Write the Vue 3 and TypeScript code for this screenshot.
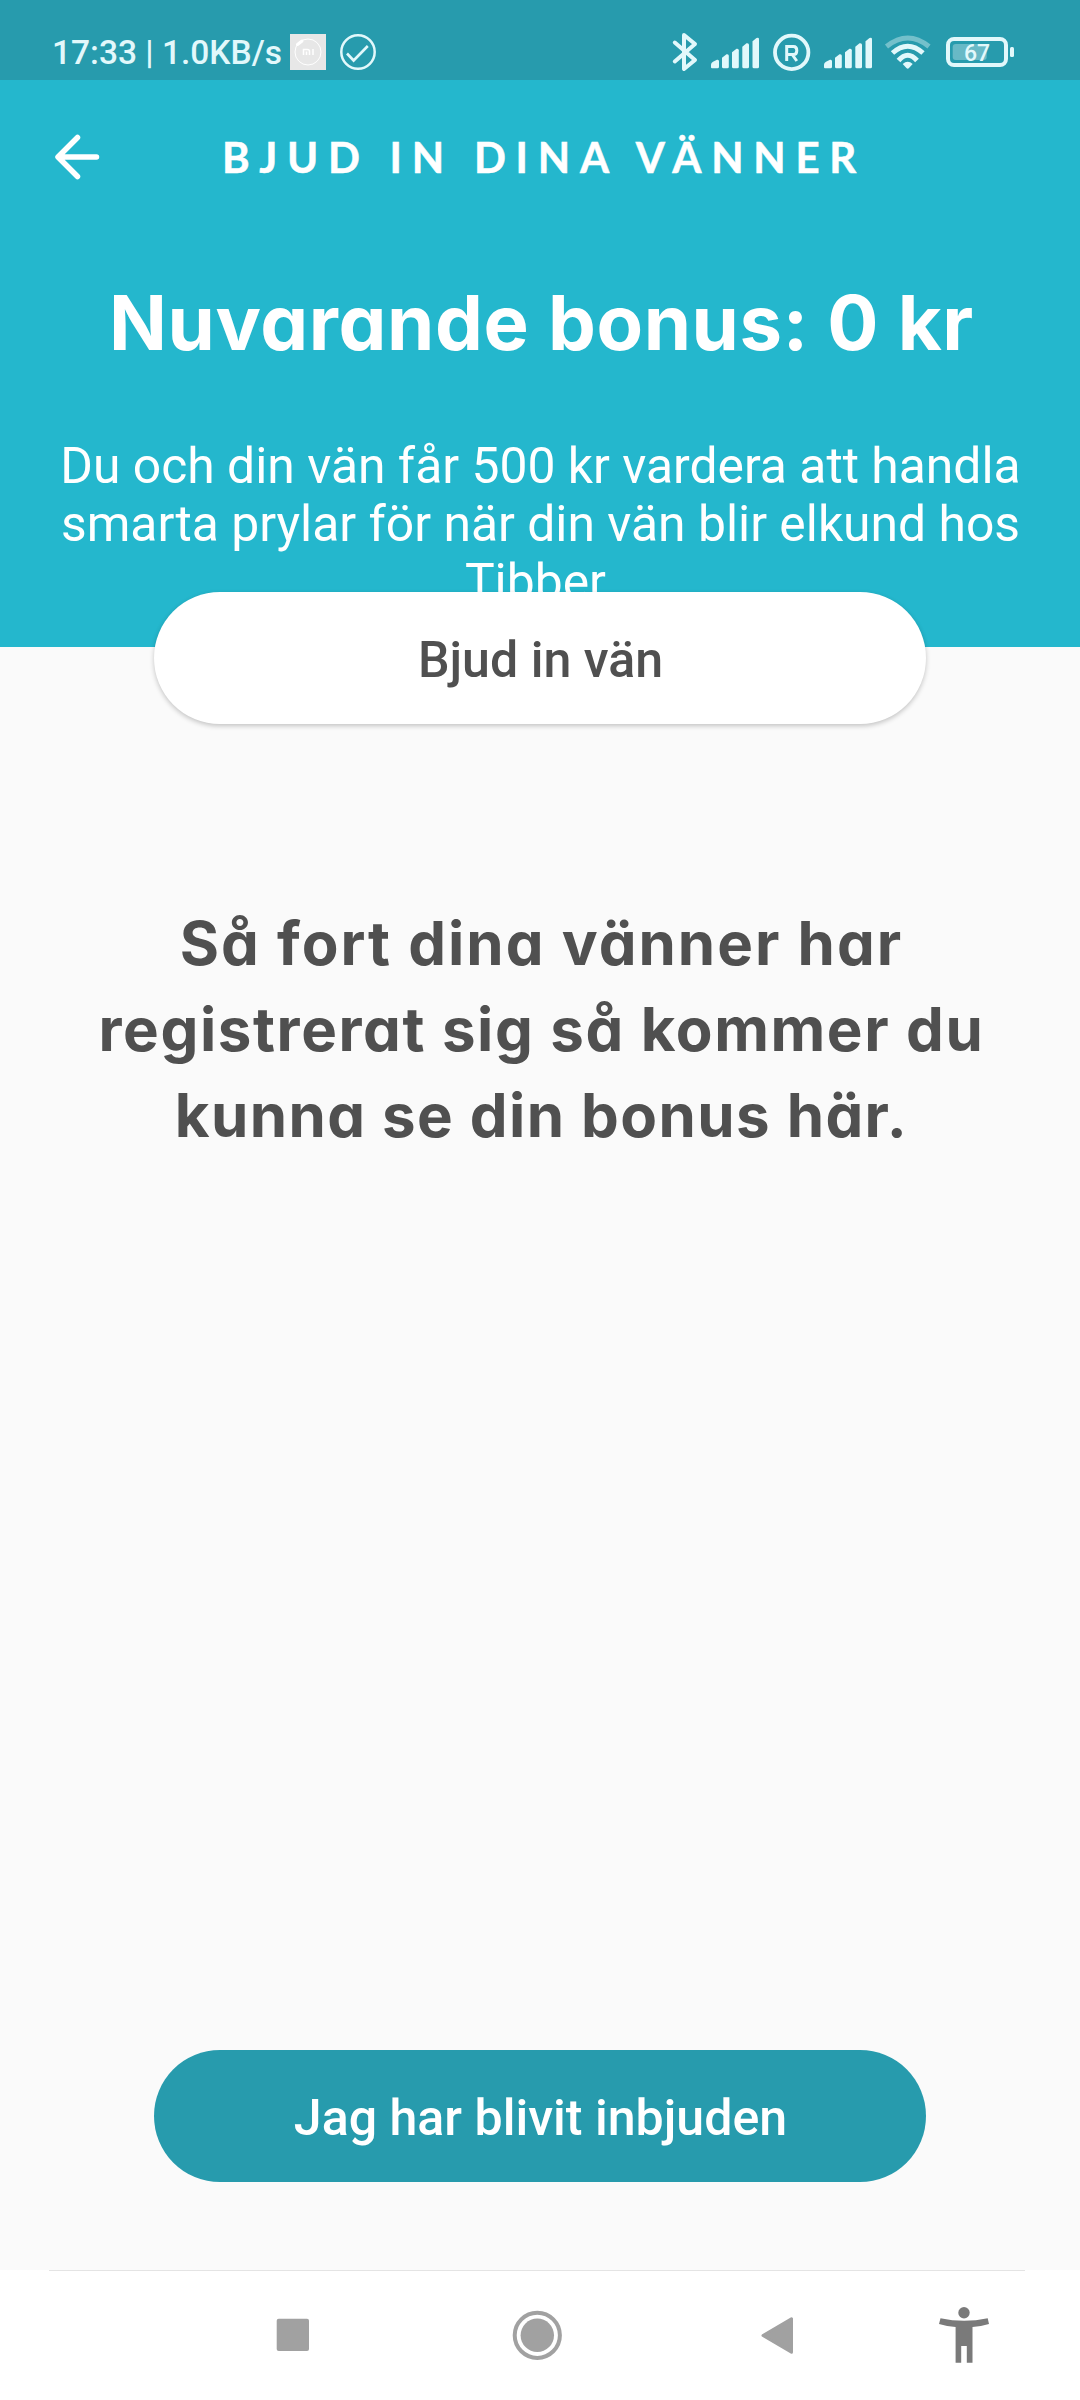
<script setup lang="ts">
interface Line {
  text: string
  spacing: number
}

const messageLines: Line[] = [
  { text: 'Så fort dina vänner har', spacing: 2 },
  { text: 'registrerat sig så kommer du', spacing: 1.6 },
  { text: 'kunna se din bonus här.', spacing: 1.4 },
]

const descriptionLines: string[] = [
  'Du och din vän får 500 kr vardera att handla',
  'smarta prylar för när din vän blir elkund hos',
  'Tibber.',
]

const signalBars: string[] = [
  'M0 30.5V27.5Q0 25.5 2 24.5L6 22.5Q8 22 8 24V29.5Q8 31 6.500 31H1Q0 31 0 30Z',
  'M11 20.500L15.500 17Q17.800 16.500 17.800 18.500V29.500Q17.800 31 16.300 31H12.500Q11 31 11 29.500Z',
  'M21 15L25.500 11.500Q27.800 11 27.800 13V29.500Q27.800 31 26.300 31H22.500Q21 31 21 29.500Z',
  'M31.300 9.500L35.500 6Q38 5.500 38 7.500V29.500Q38 31 36.500 31H32.800Q31.300 31 31.300 29.500Z',
  'M41.500 4L45.500 .7Q48 0 48 2V29.500Q48 31 46.500 31H43Q41.500 31 41.500 29.500Z',
]
</script>

<template>
  <div class="screen">
    <div class="status">
      <span class="clock">17:33 | 1.0KB/s</span>
      <svg class="status-left" width="92" height="40" viewBox="288 32 92 40" fill="none">
        <rect x="290" y="34" width="36" height="36" fill="#e7e7e7" />
        <circle cx="308" cy="52" r="13" stroke="#fff" stroke-width="1" />
        <path d="M297.500 44.500L302 41" stroke="#fff" stroke-width="3" stroke-linecap="round" />
        <path d="M303.500 55V49.500H307.500Q309.500 49.500 309.500 51.500V55M306.500 51.500V55M313 49V55" stroke="#fff" stroke-width="1.500" />
        <circle cx="358" cy="52" r="16.700" stroke="#e2f8fb" stroke-width="2.500" />
        <path d="M347 53.500L353.600 60.500L367.800 46" stroke="#e2f8fb" stroke-width="2.600" />
      </svg>
      <svg class="status-right" width="346" height="40" viewBox="670 32 346 40" fill="none">
        <path d="M674.800 42.500L695 60L684 69V35L695 44L674.800 61.500" stroke="#e2f8fb" stroke-width="4" stroke-linejoin="round" stroke-linecap="round" />
        <g fill="#e2f8fb">
          <path v-for="(d, i) in signalBars" :key="'a' + i" :d="d" transform="translate(711 37.300)" />
          <path v-for="(d, i) in signalBars" :key="'b' + i" :d="d" transform="translate(824 37.300)" />
        </g>
        <circle cx="791.700" cy="52.400" r="16.700" stroke="#e2f8fb" stroke-width="3.800" />
        <path d="M786.700 61V46.500H793.500Q796.800 46.500 796.800 50.500Q796.800 54.500 793.500 54.500H787M792.500 55L796.800 61" stroke="#e2f8fb" stroke-width="3" />
        <path d="M886.500 46.500Q907.800 29.500 929 46.500" stroke="#74c0cb" stroke-width="5" />
        <path d="M892.500 53Q907.700 39.500 923 53" stroke="#e2f8fb" stroke-width="5" />
        <path d="M898.500 60.500Q907.700 50 917 60.500" stroke="#e2f8fb" stroke-width="5" />
        <path d="M902.700 64Q907.700 59.500 912.700 64L909 68Q907.700 69.500 906.400 68Z" fill="#e2f8fb" />
        <rect x="952.700" y="44" width="34" height="16" rx="3" fill="#68b9c6" />
        <rect x="948" y="39" width="58" height="26" rx="6" stroke="#e2f8fb" stroke-width="4" />
        <rect x="1010" y="47" width="4" height="10" rx="1.500" fill="#e2f8fb" />
        <text x="977" y="60.800" class="battery-text">67</text>
      </svg>
    </div>

    <header class="hero">
      <div class="toolbar">
        <svg class="back" width="48" height="48" viewBox="0 0 48 48" fill="none" stroke="#fff" stroke-width="5.500" stroke-linecap="round" stroke-linejoin="round">
          <path d="M25.500 4.500L6 24L25.500 43.500M6.500 24H44.500" />
        </svg>
        <h1 class="title">BJUD IN DINA VÄNNER</h1>
      </div>
      <h2 class="bonus">Nuvarande bonus: 0 kr</h2>
      <p class="description">
        <span v-for="line in descriptionLines" :key="line">{{ line }}</span>
      </p>
    </header>

    <main class="body">
      <button class="pill invite">Bjud in vän</button>
      <p class="message">
        <span v-for="line in messageLines" :key="line.text" :style="{ letterSpacing: line.spacing + 'px' }">{{ line.text }}</span>
      </p>
      <button class="pill invited">Jag har blivit inbjuden</button>
    </main>

    <nav class="nav">
      <div class="divider"></div>
      <svg width="1080" height="129" viewBox="0 2271 1080 129">
        <rect x="276.700" y="2318.700" width="32.300" height="32.300" rx="2" fill="#a1a1a1" />
        <circle cx="537.300" cy="2335.300" r="22.600" fill="none" stroke="#a1a1a1" stroke-width="4" />
        <circle cx="537.300" cy="2335.300" r="16.700" fill="#a1a1a1" />
        <path d="M763 2335.500L791.500 2318.800V2352.200Z" fill="#a1a1a1" stroke="#a1a1a1" stroke-width="3" stroke-linejoin="round" />
        <g fill="#7a7a7a">
          <circle cx="964" cy="2312.800" r="5.700" />
          <path d="M940.500 2318.300Q964 2323.300 987.700 2318.300L989 2324Q981 2326.500 972.500 2327V2362.700H966.800V2346H961.200V2362.700H955.600V2327Q947 2326.500 939 2324Z" />
        </g>
      </svg>
    </nav>
  </div>
</template>

<style>
body {
  margin: 0;
}
</style>

<style scoped>
.screen {
  width: 1080px;
  height: 2400px;
  display: flex;
  flex-direction: column;
  overflow: hidden;
  background: #fafafa;
  font-family: Roboto, sans-serif;
}
.status {
  height: 80px;
  flex: none;
  box-sizing: border-box;
  padding: 32px 64px 0 52px;
  display: flex;
  align-items: flex-start;
  background: #279bad;
}
.clock {
  width: 236px;
  flex: none;
  font-size: 33.5px;
  line-height: 42px;
  font-weight: 500;
  color: #e2f8fb;
  white-space: nowrap;
}
.status-right {
  margin-left: auto;
}
.battery-text {
  font: 500 23px Roboto, sans-serif;
  fill: #e2f8fb;
  text-anchor: middle;
}
.hero {
  height: 567px;
  flex: none;
  background: #24b7cd;
  color: #fff;
}
.toolbar {
  height: 154px;
  display: flex;
  align-items: center;
  padding-left: 52px;
}
.back {
  flex: none;
}
.title {
  margin: 0 0 1px 122px;
  font: 700 42px/50px Lato, sans-serif;
  letter-spacing: 9.75px;
  -webkit-text-stroke: 0.5px #fff;
  white-space: nowrap;
}
.bonus {
  margin: 43px 0 0;
  padding-left: 3px;
  font: 650 76px/90px Inter, sans-serif;
  font-feature-settings: 'cv11';
  letter-spacing: 0.6px;
  text-align: center;
  white-space: nowrap;
}
.description {
  margin: 70px 0 0;
  padding-left: 1px;
  font-size: 49.8px;
  line-height: 58px;
  text-align: center;
}
.description span,
.message span {
  display: block;
  white-space: nowrap;
}
.body {
  flex: 1;
  display: flex;
  flex-direction: column;
  align-items: center;
}
.pill {
  width: 772px;
  height: 132px;
  flex: none;
  border: 0;
  border-radius: 66px;
  padding: 3px 0 0 1px;
  font: 500 50.1px/58px Roboto, sans-serif;
}
.invite {
  position: relative;
  margin-top: -55px;
  background: #fff;
  color: #505050;
  box-shadow: 0 2px 5px rgba(0, 0, 0, 0.22);
}
.message {
  margin: 176px 0 0;
  padding-left: 3px;
  font: 700 60px/86px Inter, sans-serif;
  font-feature-settings: 'cv11';
  color: #505050;
  text-align: center;
}
.invited {
  margin-top: auto;
  margin-bottom: 88px;
  background: #279bad;
  color: #fff;
}
.nav {
  height: 130px;
  flex: none;
  background: #fff;
}
.divider {
  height: 1px;
  margin: 0 55px 0 49px;
  background: #e4e4e4;
}
.nav svg {
  display: block;
}
</style>
